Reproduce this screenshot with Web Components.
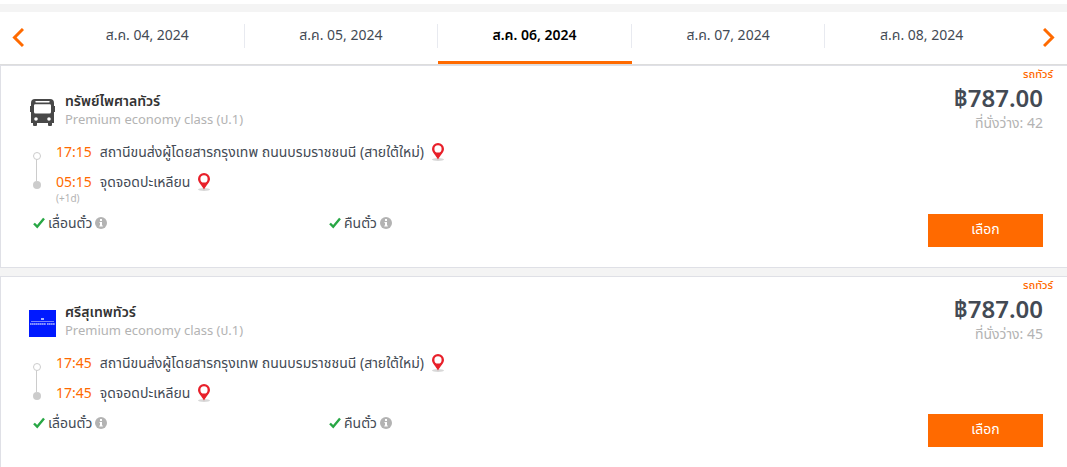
<!DOCTYPE html>
<html lang="th">
<head>
<meta charset="utf-8">
<meta name="viewport" content="width=device-width, initial-scale=1">
<title>ผลการค้นหาเที่ยวรถ</title>
<style>
	:root {
		--accent: #ff6a00;
		--text: #434a54;
		--muted: #b3b3b3;
		--line: #dfe0e6;
		--surface: #f4f4f4;
	}

	body {
		margin: 0;
		padding-top: 4px;
		background: #fff;
		color: var(--text);
		font: 14px/18px "Noto Sans", "Noto Sans Thai", "Open Sans", sans-serif;
	}

	main {
		display: flex;
		flex-direction: column;
		background: var(--surface);
		padding-top: 8px;
	}

	trip-list {
		display: flex;
		flex-direction: column;
		gap: 8px;
	}
</style>
</head>
<body>
<main>
	<date-bar>
		<date-tab>ส.ค. 04, 2024</date-tab>
		<date-tab>ส.ค. 05, 2024</date-tab>
		<date-tab active>ส.ค. 06, 2024</date-tab>
		<date-tab>ส.ค. 07, 2024</date-tab>
		<date-tab>ส.ค. 08, 2024</date-tab>
	</date-bar>
	<trip-list>
		<trip-card>
			<svg slot="logo" viewBox="0 0 27 27" width="27" height="27" aria-hidden="true">
				<path fill="#484848" fill-rule="evenodd" d="M6 0h15q4 0 4 4v3h1v6h-1v11h-2v2q0 1-1 1h-2q-1 0-1-1v-2H8v2q0 1-1 1H5q-1 0-1-1v-2H2V13H1V7h1V4q0-4 4-4zM7 2q-.7 0-.7.7t.7.7h13q.7 0 .7-.7T20 2zM6.200 5.200Q5 5.200 5 6.500V13q0 1.500 1.500 1.500h14q1.500 0 1.500-1.500V6.500q0-1.300-1.200-1.300zM7 18.200a1.800 1.800 0 1 0 0 3.600 1.800 1.800 0 0 0 0-3.600zm13 0a1.800 1.800 0 1 0 0 3.600 1.800 1.800 0 0 0 0-3.600z"/>
			</svg>
			<span slot="operator">ทรัพย์ไพศาลทัวร์</span>
			<span slot="class">Premium economy class (ป.1)</span>
			<span slot="type">รถทัวร์</span>
			<span slot="price">฿787.00</span>
			<span slot="seats">ที่นั่งว่าง: 42</span>
			<trip-stop slot="stops" time="17:15">สถานีขนส่งผู้โดยสารกรุงเทพ ถนนบรมราชชนนี (สายใต้ใหม่)</trip-stop>
			<trip-stop slot="stops" time="05:15" note="(+1d)">จุดจอดปะเหลียน</trip-stop>
			<trip-feature slot="features">เลื่อนตั๋ว</trip-feature>
			<trip-feature slot="features">คืนตั๋ว</trip-feature>
		</trip-card>
		<trip-card>
			<svg slot="logo" viewBox="0 0 27 27" width="27" height="27" aria-hidden="true">
				<path fill="#0019ff" d="M0 0h27v27H0z"/>
				<path fill="#a9b4ff" d="M12 8h3v2h-3z"/>
				<path stroke="#7583ff" d="M2 11.500h23"/>
				<path stroke="#8390ff" stroke-width="2" stroke-dasharray="1.700 .3" d="M1 14h16m1 0h8"/>
			</svg>
			<span slot="operator">ศรีสุเทพทัวร์</span>
			<span slot="class">Premium economy class (ป.1)</span>
			<span slot="type">รถทัวร์</span>
			<span slot="price">฿787.00</span>
			<span slot="seats">ที่นั่งว่าง: 45</span>
			<trip-stop slot="stops" time="17:45">สถานีขนส่งผู้โดยสารกรุงเทพ ถนนบรมราชชนนี (สายใต้ใหม่)</trip-stop>
			<trip-stop slot="stops" time="17:45">จุดจอดปะเหลียน</trip-stop>
			<trip-feature slot="features">เลื่อนตั๋ว</trip-feature>
			<trip-feature slot="features">คืนตั๋ว</trip-feature>
		</trip-card>
	</trip-list>
</main>

<script>
class DateBar extends HTMLElement {
	constructor() {
		super();

		this.attachShadow({ mode: "open" });
		this.shadowRoot.innerHTML = `<style>
			:host {
				display: flex;
				height: 52px;
				background: #fff;
				border-bottom: 1px solid #ddd;
			}

			nav {
				display: flex;
				flex: 1;
			}

			button {
				width: 51px;
				padding: 0 12px;
				border: 0;
				background: none;
				cursor: pointer;
			}

			button:last-child {
				width: 48px;
			}

			svg {
				display: block;
				fill: none;
				stroke: var(--accent);
				stroke-width: 3;
			}

			button:last-child svg {
				margin-left: auto;
			}
		</style>
		<button aria-label="ก่อนหน้า"><svg width="12" height="20" viewBox="0 0 12 20"><path d="M11 1 2.500 9.500 11 18"/></svg></button>
		<nav><slot></slot></nav>
		<button aria-label="ถัดไป"><svg width="12" height="20" viewBox="0 0 12 20"><path d="M1 1l8.500 8.500L1 18"/></svg></button>
		`;
	}
}

class DateTab extends HTMLElement {
	constructor() {
		super();

		this.attachShadow({ mode: "open" });
		this.shadowRoot.innerHTML = `<style>
			:host {
				display: flex;
				flex: 1;
			}

			a {
				box-sizing: border-box;
				flex: 1;
				padding: 12px 0 13px;
				border-bottom: 3px solid transparent;
				color: inherit;
				line-height: 22px;
				text-align: center;
				text-decoration: none;
			}

			span {
				display: block;
				padding-bottom: 2px;
				border-right: 1px solid #e8eaf0;
			}

			:host(:last-child) span {
				border-color: transparent;
			}

			:host([active]) a {
				border-color: var(--accent);
				color: #000;
				font-weight: 600;
			}
		</style>
		<a href="#"><span><slot></slot></span></a>
		`;
	}
}

class TripCard extends HTMLElement {
	constructor() {
		super();

		this.attachShadow({ mode: "open" });
		this.shadowRoot.innerHTML = `<style>
			:host {
				display: block;
				padding: 0 14px 20px 28px;
				border: 1px solid var(--line);
				border-right: 0;
				background: #fff;
			}

			.top {
				display: flex;
				justify-content: space-between;
			}

			.info {
				padding-top: 26px;
			}

			.operator {
				display: flex;
				align-items: flex-start;
				gap: 9px;
				margin-bottom: 13px;
			}

			.operator div,
			.fare {
				display: flex;
				flex-direction: column;
			}

			slot[name="logo"]::slotted(svg) {
				display: block;
				margin-top: 7px;
			}

			slot[name="operator"] {
				color: #333;
				font-weight: 600;
			}

			slot[name="class"],
			slot[name="seats"] {
				color: var(--muted);
			}

			slot[name="class"] {
				font-size: 13px;
			}

			.stops {
				display: flex;
				gap: 15px;
			}

			.stops > div {
				display: flex;
				flex-direction: column;
				gap: 8px;
			}

			.rail {
				display: block;
				margin: 10px 0 0 4px;
			}

			.fare {
				align-items: flex-end;
			}

			slot[name="type"] {
				color: var(--accent);
				font-size: 11px;
				font-weight: 500;
				line-height: 16px;
			}

			.fare div {
				padding-right: 10px;
				text-align: right;
			}

			slot[name="price"] {
				display: block;
				font-size: 24px;
				font-weight: 600;
				line-height: 32px;
			}

			.bottom {
				display: flex;
				align-items: flex-start;
				gap: 11px;
				margin: 10px 10px 0 0;
			}

			.features {
				display: grid;
				flex: 1;
				grid-template-columns: repeat(3, 1fr);
			}

			button {
				width: 115px;
				height: 33px;
				padding: 0 0 3px;
				border: 0;
				background: var(--accent);
				color: #fff;
				font: inherit;
				cursor: pointer;
			}
		</style>
		<div class="top">
			<div class="info">
				<div class="operator">
					<slot name="logo"></slot>
					<div>
						<slot name="operator"></slot>
						<slot name="class"></slot>
					</div>
				</div>
				<div class="stops">
					<svg class="rail" width="8" height="38" viewBox="0 0 8 38">
						<path stroke="#ccc" d="M3.500 8v22"/>
						<circle cx="4" cy="5" r="3.500" fill="#fff" stroke="#ccc"/>
						<circle cx="4" cy="34" r="4" fill="#ccc"/>
					</svg>
					<div><slot name="stops"></slot></div>
				</div>
			</div>
			<div class="fare">
				<slot name="type"></slot>
				<div>
					<slot name="price"></slot>
					<slot name="seats"></slot>
				</div>
			</div>
		</div>
		<div class="bottom">
			<div class="features"><slot name="features"></slot></div>
			<button>เลือก</button>
		</div>
		`;
	}
}

class TripStop extends HTMLElement {
	constructor() {
		super();

		this.attachShadow({ mode: "open" });
		this.shadowRoot.innerHTML = `<style>
			:host {
				display: block;
			}

			div {
				display: flex;
				align-items: center;
				gap: 8px;
				line-height: 22px;
			}

			time {
				color: var(--accent);
			}

			svg {
				flex: none;
			}

			small {
				display: block;
				color: var(--muted);
				font-size: 10px;
				line-height: 11px;
			}

			small:empty {
				display: none;
			}
		</style>
		<div>
			<time></time>
			<slot></slot>
			<svg width="12" height="18" viewBox="0 0 12 18" aria-hidden="true">
				<ellipse cx="6" cy="16.500" rx="6" ry="1.500" fill="#d8d8d8"/>
				<path fill="#e8202a" fill-rule="evenodd" d="M6 0a6 6 0 0 0-6 6c0 3.500 4 6.500 6 10.500 2-4 6-7 6-10.500a6 6 0 0 0-6-6zm0 2.300a3.600 3.600 0 1 1 0 7.200 3.600 3.600 0 0 1 0-7.200z"/>
			</svg>
		</div>
		<small></small>
		`;
	}

	connectedCallback() {
		this.shadowRoot.querySelector("time").textContent = this.getAttribute("time");
		this.shadowRoot.querySelector("small").textContent = this.getAttribute("note") ?? "";
	}
}

class TripFeature extends HTMLElement {
	constructor() {
		super();

		this.attachShadow({ mode: "open" });
		this.shadowRoot.innerHTML = `<style>
			:host {
				display: flex;
				align-items: center;
				gap: 3px;
				padding-left: 4px;
			}
		</style>
		<svg width="12" height="12" viewBox="0 0 12 12" aria-hidden="true"><path fill="none" stroke="#28a745" stroke-width="2.400" d="M1 6.500 4.200 9.700 11 1.500"/></svg>
		<slot></slot>
		<svg width="12" height="12" viewBox="0 0 12 12" aria-hidden="true">
			<circle cx="6" cy="6" r="6" fill="#b3b3b3"/>
			<path fill="#fff" d="M5 2h2v2H5zM4.500 5H7v3.500h.8v1H4.300v-1H5V6h-.5z"/>
		</svg>
		`;
	}
}

customElements.define("date-bar", DateBar);
customElements.define("date-tab", DateTab);
customElements.define("trip-card", TripCard);
customElements.define("trip-stop", TripStop);
customElements.define("trip-feature", TripFeature);
</script>
</body>
</html>
